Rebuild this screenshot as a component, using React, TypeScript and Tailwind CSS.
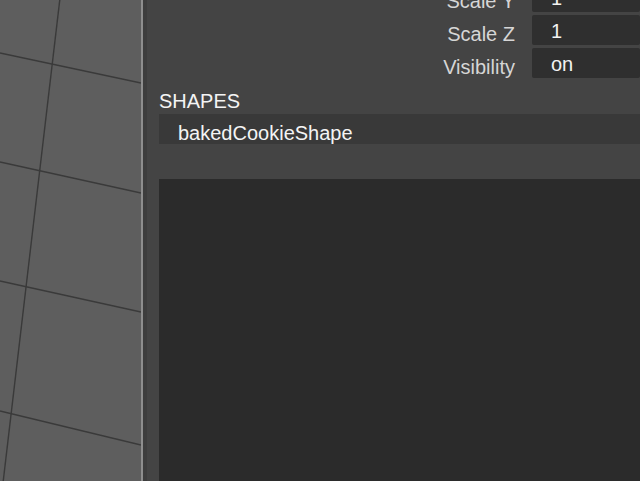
import React from "react";

const font = { fontFamily: '"Liberation Sans", Arial, sans-serif' };

function Row({ label, value }: { label: string; value: string }) {
  return (
    <div className="flex h-[30px] shrink-0">
      <div className="w-[356px] shrink-0 pt-[8px] pr-[0px] text-right text-[20px] leading-[22px] text-[#d6d6d6] whitespace-nowrap">
        {label}
      </div>
      <div className="ml-[17px] flex-1 bg-[#2f2f2f] rounded-[2px] pt-[5px] pl-[19px] text-[20px] leading-[22px] text-[#f2f2f2]">
        {value}
      </div>
    </div>
  );
}

export default function App() {
  return (
    <div className="flex w-[640px] h-[481px] overflow-hidden bg-[#444444]" style={font}>
      <div className="w-[141px] h-full shrink-0 bg-[#5e5e5e]">
        <svg width="141" height="481" viewBox="0 0 141 481" className="block">
          <g stroke="#3a3a3a" strokeWidth="1.4" fill="none">
            <line x1="60" y1="-2" x2="3" y2="483" />
            <line x1="0" y1="53" x2="141" y2="83" />
            <line x1="0" y1="162" x2="141" y2="193" />
            <line x1="0" y1="281" x2="141" y2="312" />
            <line x1="0" y1="411" x2="141" y2="445" />
          </g>
        </svg>
      </div>
      <div className="w-[2px] h-full shrink-0 bg-[#8e8e8e]" />
      <div className="w-[4px] h-full shrink-0 bg-[#3d3d3d]" />
      <div className="flex-1 flex flex-col pl-[12px] min-w-0">
        <div className="flex flex-col gap-[3px] mt-[-18px]">
          <Row label="Scale Y" value="1" />
          <Row label="Scale Z" value="1" />
          <Row label="Visibility" value="on" />
        </div>
        <div className="mt-[12px] text-[20px] leading-[22px] text-[#f4f4f4]">SHAPES</div>
        <div className="mt-[2px] h-[30px] bg-[#393939] pl-[19px] pt-[8px] text-[20px] leading-[22px] text-[#f4f4f4]">
          bakedCookieShape
        </div>
        <div className="mt-[35px] flex-1 bg-[#2b2b2b]" />
      </div>
    </div>
  );
}
